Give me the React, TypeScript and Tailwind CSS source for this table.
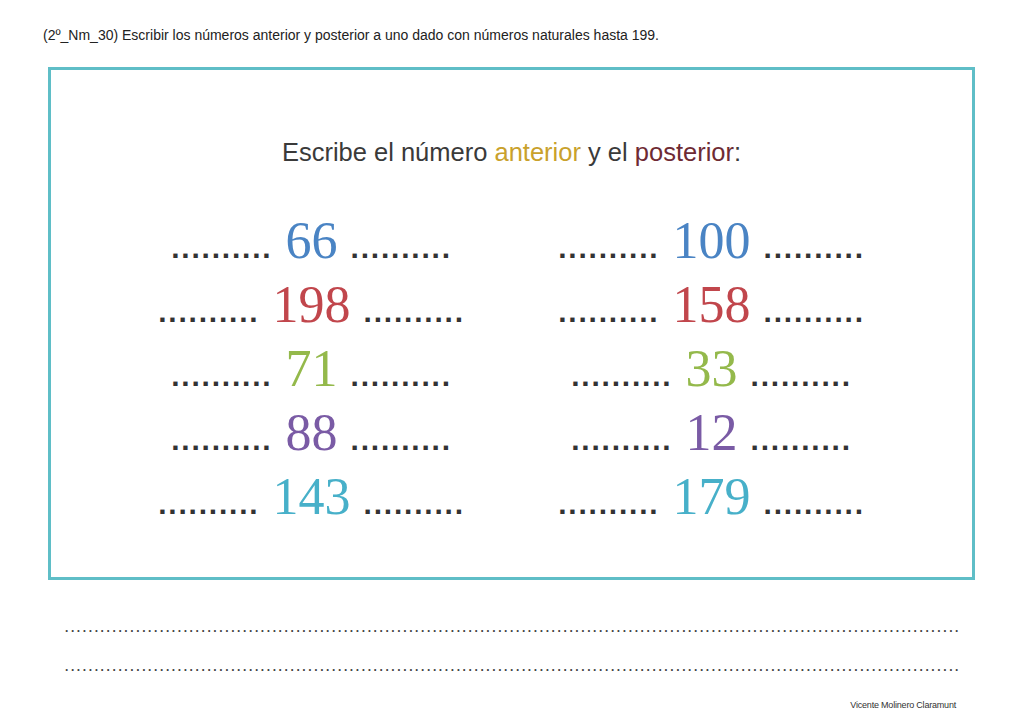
const rows: [string, string, string][] = [
  ["66", "100", "text-[#4a84c4]"],
  ["198", "158", "text-[#c1464c]"],
  ["71", "33", "text-[#94b94b]"],
  ["88", "12", "text-[#7a5ba5]"],
  ["143", "179", "text-[#47b0c9]"],
];

const DOTS = "..........";
const LINE = ".".repeat(151);

const Item = ({ value, color }: { value: string; color: string }) => (
  <div className="flex h-16 w-[400px] items-center justify-center">
    <div className="flex items-baseline gap-[13px]">
      <span className="text-[30px] font-bold leading-none tracking-[1.8px] text-[#333]">
        {DOTS}
      </span>
      <span
        className={`font-['Liberation_Serif',serif] text-[52px] leading-none ${color}`}
      >
        {value}
      </span>
      <span className="text-[30px] font-bold leading-none tracking-[1.8px] text-[#333]">
        {DOTS}
      </span>
    </div>
  </div>
);

export default function App() {
  return (
    <div className="flex h-[725px] w-[1024px] flex-col bg-white font-['Liberation_Sans',sans-serif] text-[#222]">
      <p className="pl-[43px] pt-[25px] text-[14px] leading-5">
        (2º_Nm_30) Escribir los números anterior y posterior a uno dado con números naturales hasta 199.
      </p>

      <div className="ml-[48px] mt-[22px] flex h-[513px] w-[927px] flex-col items-center border-[3px] border-[#5fbec7] pt-[62px]">
        <h1 className="text-[25.5px] leading-10 text-[#3a3a3a]">
          Escribe el número <span className="text-[#c9a12c]">anterior</span> y el{" "}
          <span className="text-[#6e2a33]">posterior</span>:
        </h1>

        <div className="mt-[37px] flex flex-col">
          {rows.map(([a, b, color]) => (
            <div key={a} className="flex">
              <Item value={a} color={color} />
              <Item value={b} color={color} />
            </div>
          ))}
        </div>
      </div>

      <div className="ml-[65px] mt-[42px] flex w-[893px] flex-col gap-[27px]">
        <div className="whitespace-nowrap text-[12px] font-bold leading-3 tracking-[2.6px] text-[#444]">
          {LINE}
        </div>
        <div className="whitespace-nowrap text-[12px] font-bold leading-3 tracking-[2.6px] text-[#444]">
          {LINE}
        </div>
      </div>

      <p className="mr-[68px] mt-[26px] self-end text-[9px] leading-3 tracking-[-0.2px] text-[#333]">
        Vicente Molinero Claramunt
      </p>
    </div>
  );
}
